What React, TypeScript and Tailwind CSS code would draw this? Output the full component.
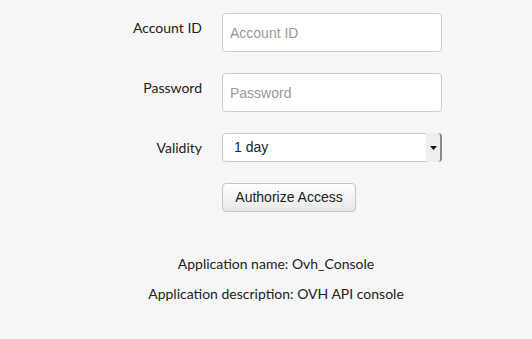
import { useState } from 'react';

export default function App() {
  const [validity, setValidity] = useState('1 day');

  return (
    <div className="min-h-[339px] w-full bg-[#f6f6f6] pl-[42px] pt-[13px] font-['Liberation_Sans',Arial,sans-serif] text-[14px] text-[#333]">
      <form className="flex w-[400px] flex-col gap-[21px]" onSubmit={e => e.preventDefault()}>
        <div className="flex items-start gap-[20px]">
          <label className="w-[160px] pt-[6px] text-right font-['Lato',sans-serif] text-[14px] leading-[18px] text-[#222]">Account ID</label>
          <input
            type="text"
            placeholder="Account ID"
            className="h-[39px] w-[220px] rounded-[4px] border border-[#cccccc] bg-white px-[7px] text-[14px] text-[#555] placeholder-[#999] outline-none"
          />
        </div>
        <div className="flex items-start gap-[20px]">
          <label className="w-[160px] pt-[6px] text-right font-['Lato',sans-serif] text-[14px] leading-[18px] text-[#222]">Password</label>
          <input
            type="password"
            placeholder="Password"
            className="h-[39px] w-[220px] rounded-[4px] border border-[#cccccc] bg-white px-[7px] text-[14px] text-[#555] placeholder-[#999] outline-none"
          />
        </div>
        <div className="flex items-start gap-[20px]">
          <label className="w-[160px] pt-[6px] text-right font-['Lato',sans-serif] text-[14px] leading-[18px] text-[#222]">Validity</label>
          <div className="relative h-[29px] w-[220px]">
            <select
              value={validity}
              onChange={e => setValidity(e.target.value)}
              className="h-full w-full appearance-none rounded-[4px] border border-[#c8c8c8] bg-white pl-[11px] text-[14px] text-[#222] outline-none"
            >
              <option>1 day</option>
              <option>1 week</option>
              <option>1 month</option>
              <option>Unlimited</option>
            </select>
            <span className="pointer-events-none absolute right-0 top-0 flex h-[29px] w-[16px] items-center justify-center rounded-r-[4px] border-r-2 border-[#8a8a8a] bg-[#eeeeee]">
              <svg width="7" height="4" viewBox="0 0 7 4"><path d="M0 0h7L3.5 4z" fill="#111" /></svg>
            </span>
          </div>
        </div>
        <div className="flex gap-[20px]">
          <div className="w-[160px]" />
          <button
            type="submit"
            className="h-[29px] w-[134px] rounded-[4px] border border-[#c5c5c5] bg-gradient-to-b from-white to-[#e8e8e8] text-[14px] text-[#222]"
          >
            Authorize Access
          </button>
        </div>
      </form>
      <div className="mt-[43px] flex w-[468px] flex-col items-center gap-[12px] font-['Lato',sans-serif] text-[14px] leading-[18px] text-[#222]">
        <p>Application name: Ovh_Console</p>
        <p>Application description: OVH API console</p>
      </div>
    </div>
  );
}
